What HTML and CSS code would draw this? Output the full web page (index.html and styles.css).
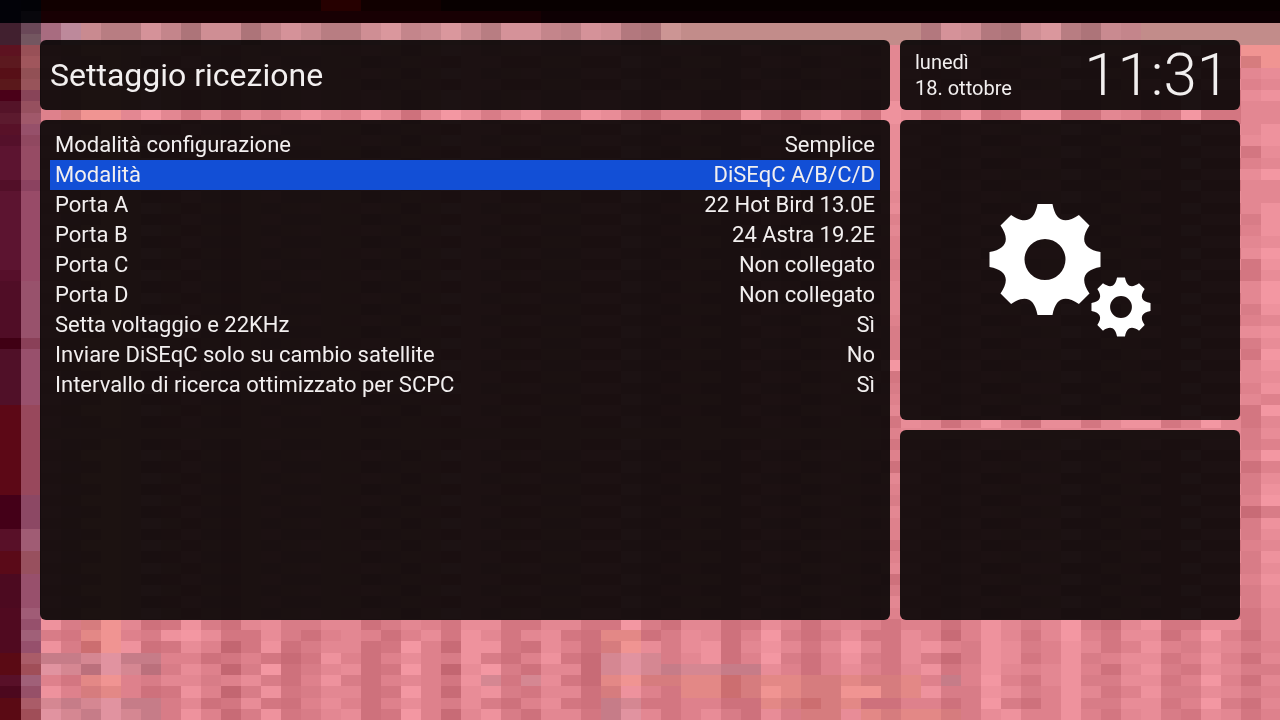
FILE: index.html
```html
<!DOCTYPE html>
<html lang="it">
<head>
<meta charset="utf-8">
<meta name="viewport" content="width=device-width, initial-scale=1">
<title>Settaggio ricezione</title>
<link rel="stylesheet" href="styles.css">
</head>
<body>
<canvas class="backdrop" id="backdrop" width="1280" height="720" aria-hidden="true"></canvas>
<main class="screen">
  <header class="panel title-panel">
    <h1 class="title">Settaggio ricezione</h1>
  </header>
  <section class="panel clock-panel">
    <div class="date"><span>lunedì</span><span>18. ottobre</span></div>
    <time class="time" datetime="11:31">11:31</time>
  </section>
  <section class="panel settings-panel">
    <dl class="settings">
      <div class="setting"><dt>Modalità configurazione</dt><dd>Semplice</dd></div>
      <div class="setting selected"><dt>Modalità</dt><dd>DiSEqC A/B/C/D</dd></div>
      <div class="setting"><dt>Porta A</dt><dd>22 Hot Bird 13.0E</dd></div>
      <div class="setting"><dt>Porta B</dt><dd>24 Astra 19.2E</dd></div>
      <div class="setting"><dt>Porta C</dt><dd>Non collegato</dd></div>
      <div class="setting"><dt>Porta D</dt><dd>Non collegato</dd></div>
      <div class="setting"><dt>Setta voltaggio e 22KHz</dt><dd>Sì</dd></div>
      <div class="setting"><dt>Inviare DiSEqC solo su cambio satellite</dt><dd>No</dd></div>
      <div class="setting"><dt>Intervallo di ricerca ottimizzato per SCPC</dt><dd>Sì</dd></div>
    </dl>
  </section>
  <section class="panel icon-panel">
    <svg class="gears" viewBox="0 0 162 134" aria-hidden="true">
      <defs>
        <path id="gear" fill-rule="evenodd" d="M-7.5-55.5H7.5C10.5-38.5 19.8-34.7 33.9-44.5L44.5-33.9C34.7-19.8 38.5-10.5 55.5-7.5V7.5C38.5 10.5 34.7 19.8 44.5 33.9L33.9 44.5C19.8 34.7 10.5 38.5 7.5 55.5H-7.5C-10.5 38.5-19.8 34.7-33.9 44.5L-44.5 33.9C-34.7 19.8-38.5 10.5-55.5 7.5V-7.5C-38.5-10.5-34.7-19.8-44.5-33.9L-33.9-44.5C-19.8-34.7-10.5-38.5-7.5-55.5ZM-20.5 0A20.5 20.5 0 0 0 20.5 0A20.5 20.5 0 0 0-20.5 0Z"/>
      </defs>
      <use href="#gear" transform="translate(56 56.5)"/>
      <use href="#gear" transform="translate(132 104) scale(.532)"/>
    </svg>
  </section>
  <section class="panel info-panel"></section>
</main>
<script src="backdrop.js"></script>
</body>
</html>
```

FILE: styles.css
```css
* {
  box-sizing: border-box;
}

body {
  margin: 0;
  background: #d87d88;
  color: #f2efef;
  font-family: Roboto, "Noto Sans", sans-serif;
}

.backdrop {
  position: fixed;
  inset: 0;
  z-index: -1;
  width: 100%;
  height: 100%;
}

.screen {
  display: grid;
  grid-template-columns: 5fr 2fr;
  grid-template-rows: 70px 30fr 19fr;
  gap: 10px;
  min-height: 100vh;
  padding: 40px 40px 100px;
}

.panel {
  border-radius: 6px;
  background: rgba(10, 6, 7, 0.92);
}

.title-panel {
  display: flex;
  align-items: center;
  padding: 0 10px;
}

.title {
  margin: 0;
  font-size: 32px;
  font-weight: 400;
  line-height: 40px;
}

.clock-panel {
  display: flex;
  align-items: center;
  justify-content: space-between;
  padding: 0 10px 0 15px;
}

.date {
  display: flex;
  flex-direction: column;
  font-size: 20px;
  line-height: 26px;
}

.time {
  font-size: 60px;
  font-weight: 300;
  line-height: 70px;
}

.settings-panel {
  grid-row: 2 / 4;
  padding: 10px;
}

.settings {
  margin: 0;
  font-size: 22px;
  line-height: 30px;
}

.setting {
  display: flex;
  justify-content: space-between;
  gap: 20px;
  padding: 0 5px;
}

.setting dd {
  margin: 0;
}

.selected {
  background: #124fd6;
}

.icon-panel {
  display: flex;
  align-items: center;
  justify-content: center;
}

.gears {
  width: 162px;
  fill: #fff;
}
```

FILE: backdrop.js
```js
(function () {
  const SIZE = 64;

  // Rows that show between and around the panels, starting at column 2.
  const rows = {
    2: 'rs52274066047522684' + '585277437610' + 'hggggggggg' + 'ggg176106820' + '54ggggggg',
    9: '5bdd6963636468658626' + '974684487425522842685' + '287348238822652393366',
    55: '84bd6238426744662465' + '377336633942662375256' + '535525864694268337736',
    56: '43cd5489733742565257' + '38636732cc24762594247' + '337515863695377259526',
    57: '84ad8237503824662395' + '18832752bd74782686369' + '637854874586358547645',
    58: 'nnopnn55235313852575' + '48425831opo4682594258' + '437414873584577358526',
    59: 'pompom47504924672395' + '07942661oponoonn75257' + '536835865685268437644',
    60: '53cd5466457425842565' + '38o3o731cdbbccabccbbc' + 'bbc5n5953684477359526',
    61: '85bc5238504834662395' + '17843662b853ccabdcbbd' + 'dbc844874586358447645',
    62: 'onopnn46237325752575' + '47425732no335522cbabc' + '225524942584477359426',
    63: 'ponpon48514834672395' + '16842663np63574274bb7' + 'cbccb4785585367437635'
  };
  rows[3] = rows[2];
  rows[10] = rows[9];
  const gapRow = '7625852773' + '6883596';

  // Columns that stay visible from row 4 to row 54.
  const edges = {
    44: '66666777' + '77777' + '6756554' + '5666544' + '4934563' + '5352654' + '6553562465',
    62: 'db657466' + '73576' + '6645673' + '3664574' + '3665633' + '4452445' + '1445445443',
    63: 'dd768758' + '87696' + '6888798' + '7998687' + '9878596' + '7595789' + '4876878776'
  };

  const tints = {
    a: '#cc6e70', b: '#d67c7e', c: '#e38886', d: '#f09492',
    m: '#bb707c', n: '#c67c88', o: '#d58792', p: '#e193a0',
    r: '#a86c80', s: '#bd899b', g: '#c28c8a', h: '#cc9594'
  };

  // Each entry: first row it applies to, colour of column 0, colour of column 1.
  const leftBands = [
    [0, '#020208', '#020206'], [1, '#020208', '#08070c'], [2, '#41202f', '#6a4858'],
    [3, '#41202f', '#735660'], [4, '#5d1220', '#985057'], [5, '#5c191f', '#a0565c'],
    [6, '#570f17', '#925055'], [7, '#5a181b', '#98545a'], [8, '#4a0018', '#884458'],
    [9, '#541328', '#96505f'], [10, '#5c1a2e', '#a0586a'], [11, '#581128', '#96506a'],
    [12, '#54102a', '#904860'], [13, '#5c1430', '#964b64'], [16, '#520f28', '#8b4260'],
    [17, '#5c1430', '#984b68'], [24, '#560f2a', '#984b68'], [25, '#500d26', '#98526c'],
    [30, '#400014', '#8a4058'], [31, '#501028', '#98506c'], [36, '#5c0816', '#98485c'],
    [44, '#440018', '#8c4864'], [47, '#581028', '#a05c74'], [49, '#5a0a18', '#98505e'],
    [51, '#4c0a20', '#98506c'], [54, '#500a20', '#a05c76'], [55, '#500a20', '#96506c'],
    [56, '#500a20', '#a06078'], [57, '#500a20', '#96506c'], [58, '#5a0a14', '#aa5c68'],
    [59, '#5a0a14', '#a04e58'], [60, '#581028', '#a06078'], [61, '#4c081e', '#965068'],
    [62, '#5a0a14', '#aa5c68'], [63, '#5a0a14', '#a04e58']
  ];

  function blend(from, to, t) {
    return 'rgb(' + from.map((v, i) => Math.round(v + (to[i] - v) * t)).join(',') + ')';
  }

  function shade(code, y) {
    if (tints[code]) return tints[code];
    const t = Number(code) / 9;
    return y < 4
      ? blend([173, 116, 121], [224, 155, 162], t)
      : blend([195, 102, 113], [243, 151, 162], t);
  }

  function colour(x, y) {
    if (x < 2) return leftBands.filter(band => band[0] <= y).pop()[x + 1];
    if (y === 0) return x === 16 || x === 17 ? '#260000' : x < 22 ? '#110000' : '#080000';
    if (y === 1) return x < 27 ? '#180003' : '#0e0003';
    if (rows[y]) return shade(rows[y][x - 2], y);
    if (edges[x]) return shade(edges[x][y - 4], y);
    if (y === 37 && x > 44) return shade(gapRow[x - 45], y);
    if (y === 38) return shade('6', y);
    return shade(rows[y % 2 ? 55 : 9][x - 2], y);
  }

  const context = document.getElementById('backdrop').getContext('2d');
  for (let y = 0; y < SIZE; y++) {
    const y0 = Math.round(y * 11.25);
    const y1 = Math.round((y + 1) * 11.25);
    for (let x = 0; x < SIZE; x++) {
      const x0 = x ? x * 20 + 1 : 0;
      context.fillStyle = colour(x, y);
      context.fillRect(x0, y0, x * 20 + 21 - x0, y1 - y0);
    }
  }
})();
```
